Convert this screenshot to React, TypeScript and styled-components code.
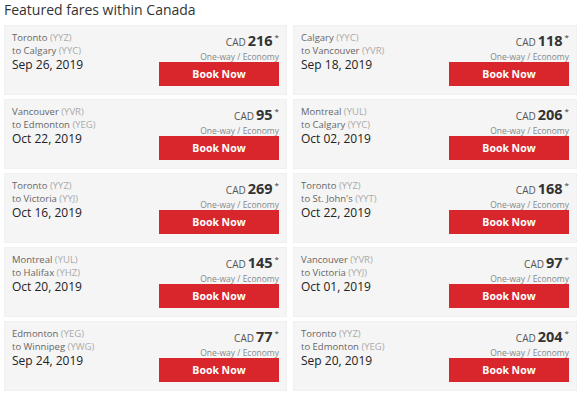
import React from "react";
import styled, { createGlobalStyle } from "styled-components";

const Global = createGlobalStyle`
  html, body { margin: 0; padding: 0; background: #fff; }
  body { font-family: "Open Sans", "DejaVu Sans", sans-serif; color: #333; }
`;

const Page = styled.div`
  padding: 0 2px 0 4px;
  width: 579px;
  box-sizing: border-box;
`;

const Title = styled.h2`
  margin: 0;
  height: 25px;
  padding-top: 1px;
  box-sizing: border-box;
  font-size: 14px;
  font-weight: 400;
  line-height: 18px;
  color: #333;
`;

const Grid = styled.div`
  display: grid;
  grid-template-columns: 283px 284px;
  column-gap: 6px;
  row-gap: 4px;
`;

const Card = styled.div`
  height: 70px;
  box-sizing: border-box;
  background: #f5f5f5;
  border: 1px solid #f0f0f0;
  padding: 6px 7px 8px 7px;
  display: flex;
  justify-content: space-between;
`;

const Left = styled.div`
  display: flex;
  flex-direction: column;
`;

const City = styled.div`
  font-size: 9.5px;
  line-height: 12.5px;
  color: #666;
`;

const Code = styled.span`
  color: #aaa;
`;

const DateText = styled.div`
  font-size: 12px;
  line-height: 15px;
  font-weight: 400;
  color: #222;
`;

const Right = styled.div`
  display: flex;
  flex-direction: column;
  align-items: flex-end;
  justify-content: space-between;
  width: 120px;
`;

const PriceBlock = styled.div`
  display: flex;
  flex-direction: column;
  align-items: flex-end;
`;

const Price = styled.div`
  font-size: 10px;
  line-height: 17px;
  color: #555;
  display: flex;
  align-items: baseline;
`;

const Amount = styled.span`
  font-size: 14.5px;
  font-weight: 700;
  color: #333;
  margin-left: 2px;
`;

const Star = styled.span`
  font-size: 8px;
  line-height: 8px;
  margin-left: 2px;
  align-self: flex-start;
  margin-top: 1px;
  color: #333;
`;

const Fare = styled.div`
  font-size: 8.5px;
  line-height: 11px;
  color: #888;
`;

const BookButton = styled.button`
  width: 120px;
  height: 24px;
  border: none;
  background: #d9262c;
  color: #fff;
  font-family: "Open Sans", "DejaVu Sans", sans-serif;
  font-size: 10.5px;
  font-weight: 700;
  padding: 0;
  cursor: pointer;
`;

type FareItem = {
  from: string;
  fromCode: string;
  to: string;
  toCode: string;
  date: string;
  price: number;
};

const fares: FareItem[] = [
  { from: "Toronto", fromCode: "YYZ", to: "Calgary", toCode: "YYC", date: "Sep 26, 2019", price: 216 },
  { from: "Calgary", fromCode: "YYC", to: "Vancouver", toCode: "YVR", date: "Sep 18, 2019", price: 118 },
  { from: "Vancouver", fromCode: "YVR", to: "Edmonton", toCode: "YEG", date: "Oct 22, 2019", price: 95 },
  { from: "Montreal", fromCode: "YUL", to: "Calgary", toCode: "YYC", date: "Oct 02, 2019", price: 206 },
  { from: "Toronto", fromCode: "YYZ", to: "Victoria", toCode: "YYJ", date: "Oct 16, 2019", price: 269 },
  { from: "Toronto", fromCode: "YYZ", to: "St. John's", toCode: "YYT", date: "Oct 22, 2019", price: 168 },
  { from: "Montreal", fromCode: "YUL", to: "Halifax", toCode: "YHZ", date: "Oct 20, 2019", price: 145 },
  { from: "Vancouver", fromCode: "YVR", to: "Victoria", toCode: "YYJ", date: "Oct 01, 2019", price: 97 },
  { from: "Edmonton", fromCode: "YEG", to: "Winnipeg", toCode: "YWG", date: "Sep 24, 2019", price: 77 },
  { from: "Toronto", fromCode: "YYZ", to: "Edmonton", toCode: "YEG", date: "Sep 20, 2019", price: 204 },
];

export default function App() {
  return (
    <Page>
      <Global />
      <Title>Featured fares within Canada</Title>
      <Grid>
        {fares.map((f, i) => (
          <Card key={i}>
            <Left>
              <City>
                {f.from} <Code>({f.fromCode})</Code>
              </City>
              <City>
                to {f.to} <Code>({f.toCode})</Code>
              </City>
              <DateText>{f.date}</DateText>
            </Left>
            <Right>
              <PriceBlock>
                <Price>
                  CAD<Amount>{f.price}</Amount>
                  <Star>*</Star>
                </Price>
                <Fare>One-way / Economy</Fare>
              </PriceBlock>
              <BookButton>Book Now</BookButton>
            </Right>
          </Card>
        ))}
      </Grid>
    </Page>
  );
}
